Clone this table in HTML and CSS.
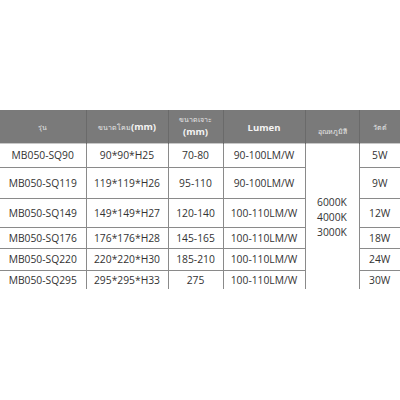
FILE: index.html
```html
<!DOCTYPE html>
<html lang="th">
<head>
<meta charset="utf-8">
<title>MB050-SQ</title>
<link rel="stylesheet" href="styles.css">
</head>
<body>
<div class="page">
  <table class="spec">
    <colgroup>
      <col class="c1"><col class="c2"><col class="c3"><col class="c4"><col class="c5"><col class="c6">
    </colgroup>
    <thead>
      <tr class="head">
        <th><span class="th-thai">รุ่น</span></th>
        <th><span class="th-thai">ขนาดโคม</span><span class="th-bold">(mm)</span></th>
        <th class="stack"><span class="th-thai">ขนาดเจาะ</span><span class="th-bold">(mm)</span></th>
        <th><span class="th-bold">Lumen</span></th>
        <th class="low"><span class="th-thai">อุณหภูมิสี</span></th>
        <th><span class="th-thai">วัตต์</span></th>
      </tr>
    </thead>
    <tbody>
      <tr class="r1">
        <td>MB050-SQ90</td><td>90*90*H25</td><td>70-80</td><td>90-100LM/W</td>
        <td class="temp" rowspan="6">6000K<br>4000K<br>3000K</td>
        <td>5W</td>
      </tr>
      <tr class="r2"><td>MB050-SQ119</td><td>119*119*H26</td><td>95-110</td><td>90-100LM/W</td><td>9W</td></tr>
      <tr class="r3"><td>MB050-SQ149</td><td>149*149*H27</td><td>120-140</td><td>100-110LM/W</td><td>12W</td></tr>
      <tr class="r4"><td>MB050-SQ176</td><td>176*176*H28</td><td>145-165</td><td>100-110LM/W</td><td>18W</td></tr>
      <tr class="r5"><td>MB050-SQ220</td><td>220*220*H30</td><td>185-210</td><td>100-110LM/W</td><td>24W</td></tr>
      <tr class="r6"><td>MB050-SQ295</td><td>295*295*H33</td><td>275</td><td>100-110LM/W</td><td>30W</td></tr>
    </tbody>
  </table>
</div>
</body>
</html>
```

FILE: styles.css
```css
html, body {
  margin: 0;
  padding: 0;
  background: #ffffff;
}
.page {
  width: 400px;
  height: 400px;
  padding-top: 110px;
  box-sizing: border-box;
}
.spec {
  width: 400px;
  border-collapse: collapse;
  table-layout: fixed;
  font-family: "Open Sans", "Noto Sans", sans-serif;
  color: #333333;
}
.c1 { width: 86px; }
.c2 { width: 82px; }
.c3 { width: 55px; }
.c4 { width: 82px; }
.c5 { width: 54px; }
.c6 { width: 41px; }

.head { height: 33px; }
.head th {
  background: #7a7a7a;
  color: #f2f2f2;
  padding: 0;
  text-align: center;
  vertical-align: middle;
  border-left: 1px solid #6a6a6a;
  font-weight: normal;
  line-height: 12px;
}
.head th:first-child { border-left: none; }
.head th.stack span { display: block; }
.head th.low { vertical-align: bottom; padding-bottom: 5px; }
.th-thai {
  font-size: 7px;
  color: #e8e8e8;
}
.th-bold {
  font-size: 9.5px;
  font-weight: bold;
  color: #f4f4f4;
}

tbody td {
  padding: 0;
  text-align: center;
  vertical-align: middle;
  font-size: 10.3px;
  line-height: 12px;
  border-left: 1px solid #8a8a8a;
  border-top: 1px solid #8a8a8a;
  white-space: nowrap;
}
tbody tr td:first-child { border-left: none; }
tbody tr.r1 td { border-top: 1px solid #c8c8c8; }
.r1 { height: 24px; }
.r2 { height: 31px; }
.r3 { height: 29px; }
.r4 { height: 21px; }
.r5 { height: 22px; }
.r6 { height: 19px; }
td.temp {
  line-height: 15px;
  padding-top: 2px;
}
```
